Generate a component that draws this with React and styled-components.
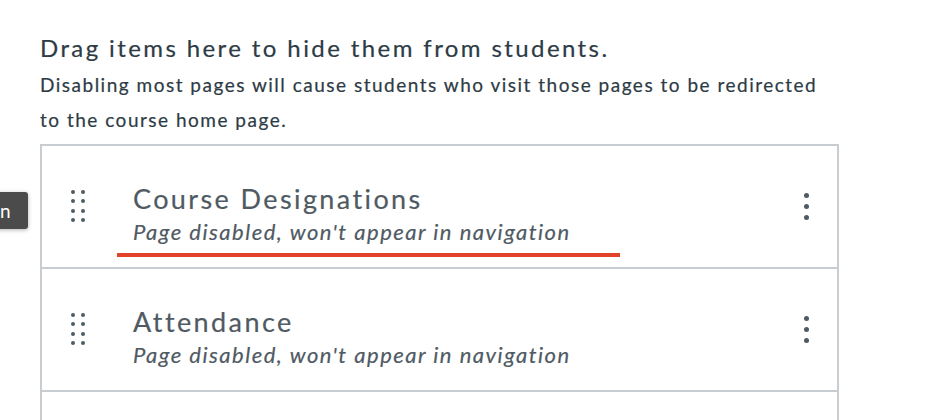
import React from 'react';
import styled, { createGlobalStyle } from 'styled-components';

const GlobalStyle = createGlobalStyle`
    html, body {
        margin: 0;
        padding: 0;
        background: #ffffff;
        font-family: Lato, "Open Sans", sans-serif;
        overflow: hidden;
    }
`;

const Page = styled.div`
    position: relative;
    width: 938px;
    height: 420px;
    padding: 33px 0 0 40px;
    box-sizing: border-box;
    overflow: hidden;
`;

const Heading = styled.h3`
    margin: 0;
    font-size: 24px;
    font-weight: 400;
    line-height: 30px;
    letter-spacing: 2.4px;
    color: #2d3b45;
    -webkit-text-stroke: 0.2px #2d3b45;
`;

const Hint = styled.p`
    margin: 4px 0 7px;
    width: 790px;
    font-size: 19px;
    line-height: 35px;
    letter-spacing: 1.5px;
    color: #2d3b45;
    -webkit-text-stroke: 0.2px #2d3b45;
`;

const List = styled.ul`
    list-style: none;
    margin: 0;
    padding: 0;
    width: 799px;
    border: 2px solid #c7cdd1;
    border-bottom: none;
    box-sizing: border-box;
`;

const Row = styled.li`
    position: relative;
    display: flex;
    align-items: center;
    height: 123px;
    padding: 0 0 0 29px;
    border-bottom: 2px solid #c7cdd1;
    box-sizing: border-box;
`;

const Handle = styled.div`
    display: grid;
    grid-template-columns: repeat(2, 4px);
    grid-auto-rows: 4px;
    column-gap: 6px;
    row-gap: 5.2px;
    margin-top: -1px;

    span {
        width: 4px;
        height: 4px;
        border-radius: 50%;
        background: #4f5a63;
    }
`;

const Text = styled.div`
    flex: 1;
    align-self: flex-start;
    padding-top: 38px;
    margin-left: 48px;
    color: #4f5a63;
    -webkit-text-stroke: 0.2px #4f5a63;
`;

const Title = styled.div`
    font-size: 27px;
    line-height: 30px;
    letter-spacing: 2.4px;
`;

const Status = styled.div`
    margin-top: 3px;
    font-size: 22px;
    font-style: italic;
    line-height: 30px;
    letter-spacing: 1.5px;
`;

const Kebab = styled.div`
    display: flex;
    flex-direction: column;
    gap: 6.3px;
    margin-right: 28px;

    span {
        width: 5px;
        height: 5px;
        border-radius: 50%;
        background: #4f5a63;
    }
`;

const Underline = styled.div`
    position: absolute;
    left: 75px;
    top: 107px;
    width: 503px;
    height: 4px;
    background: #e2412a;
`;

const Tooltip = styled.div`
    position: absolute;
    right: 910px;
    top: 192px;
    height: 37px;
    padding: 0 16px 0 12px;
    display: flex;
    align-items: center;
    white-space: nowrap;
    background: #4b4b4b;
    color: #ffffff;
    font-size: 19px;
    letter-spacing: 1.5px;
    border-radius: 3px;
    box-shadow: 0 1px 4px rgba(0, 0, 0, 0.3);
`;

const pages = [
    { title: 'Course Designations', marked: true },
    { title: 'Attendance' },
    { title: 'Announcements' },
];

function DragHandle() {
    return (
        <Handle>
            {Array.from({ length: 8 }).map((_, i) => (
                <span key={i} />
            ))}
        </Handle>
    );
}

function MoreButton() {
    return (
        <Kebab>
            <span />
            <span />
            <span />
        </Kebab>
    );
}

export default function App() {
    return (
        <>
            <GlobalStyle />
            <Page>
                <Heading>Drag items here to hide them from students.</Heading>
                <Hint>
                    Disabling most pages will cause students who visit those pages to be redirected to the course home page.
                </Hint>
                <List>
                    {pages.map((page) => (
                        <Row key={page.title}>
                            <DragHandle />
                            <Text>
                                <Title>{page.title}</Title>
                                <Status>Page disabled, won't appear in navigation</Status>
                            </Text>
                            <MoreButton />
                            {page.marked && <Underline />}
                        </Row>
                    ))}
                </List>
                <Tooltip>Hide from navigation</Tooltip>
            </Page>
        </>
    );
}
